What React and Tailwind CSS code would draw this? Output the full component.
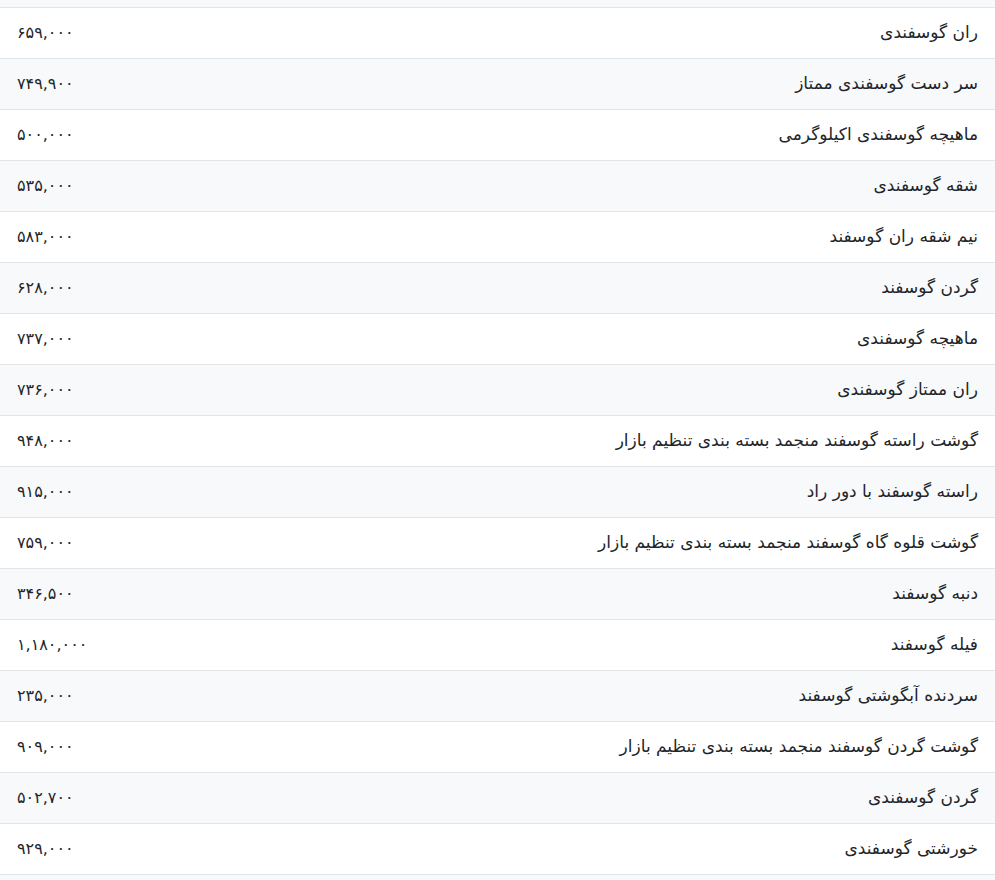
const rows = [
  ['ران گوسفندی', '۶۵۹,۰۰۰'],
  ['سر دست گوسفندی ممتاز', '۷۴۹,۹۰۰'],
  ['ماهیچه گوسفندی اکیلوگرمی', '۵۰۰,۰۰۰'],
  ['شقه گوسفندی', '۵۳۵,۰۰۰'],
  ['نیم شقه ران گوسفند', '۵۸۳,۰۰۰'],
  ['گردن گوسفند', '۶۲۸,۰۰۰'],
  ['ماهیچه گوسفندی', '۷۳۷,۰۰۰'],
  ['ران ممتاز گوسفندی', '۷۳۶,۰۰۰'],
  ['گوشت راسته گوسفند منجمد بسته بندی تنظیم بازار', '۹۴۸,۰۰۰'],
  ['راسته گوسفند با دور راد', '۹۱۵,۰۰۰'],
  ['گوشت قلوه گاه گوسفند منجمد بسته بندی تنظیم بازار', '۷۵۹,۰۰۰'],
  ['دنبه گوسفند', '۳۴۶,۵۰۰'],
  ['فیله گوسفند', '۱,۱۸۰,۰۰۰'],
  ['سردنده آبگوشتی گوسفند', '۲۳۵,۰۰۰'],
  ['گوشت گردن گوسفند منجمد بسته بندی تنظیم بازار', '۹۰۹,۰۰۰'],
  ['گردن گوسفندی', '۵۰۲,۷۰۰'],
  ['خورشتی گوسفندی', '۹۲۹,۰۰۰'],
];

export default function App() {
  return (
    <div
      dir="rtl"
      className="w-full bg-white text-[17px] text-[#212529]"
      style={{ fontFamily: '"DejaVu Sans", sans-serif' }}
    >
      <div className="h-[8px] bg-[#f8f9fa] border-b border-[#e3e6e9]" />
      {rows.map(([name, price], i) => (
        <div
          key={i}
          className={`flex items-center h-[51px] border-b border-[#e3e6e9] px-4 ${
            i % 2 === 1 ? 'bg-[#f8f9fa]' : 'bg-white'
          }`}
        >
          <div className="flex-1 text-right pr-px">{name}</div>
          <div className="w-[200px] text-left pl-px text-[16px]" dir="ltr">
            {price}
          </div>
        </div>
      ))}
      <div className="h-[6px] bg-[#f8f9fa]" />
    </div>
  );
}
